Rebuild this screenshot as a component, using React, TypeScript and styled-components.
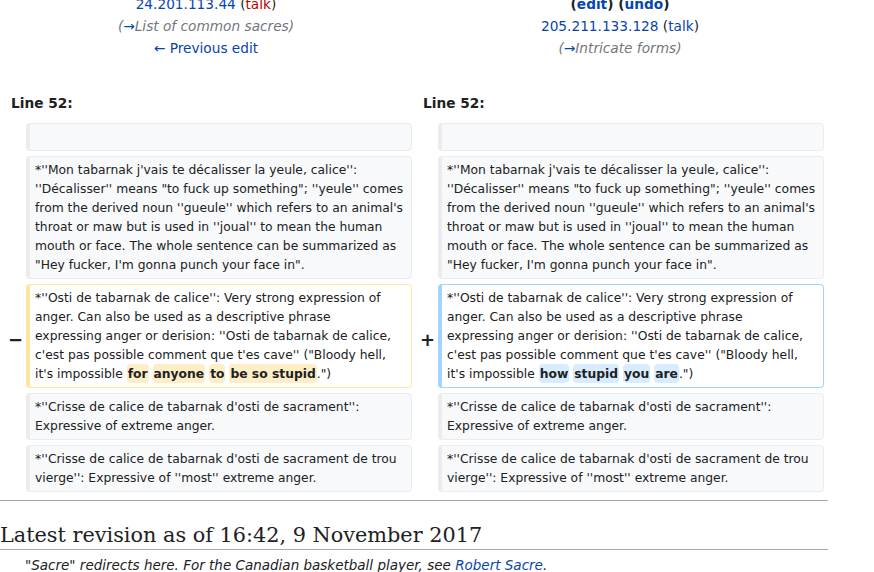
import React from "react";
import styled, { createGlobalStyle } from "styled-components";

const GlobalStyle = createGlobalStyle`
  body {
    margin: 0;
    background: #ffffff;
    color: #202122;
    font-family: "DejaVu Sans", sans-serif;
    overflow: hidden;
  }
`;

const Page = styled.div`
  width: 828px;
  margin-top: -7px;
`;

const DiffHeader = styled.div`
  display: grid;
  grid-template-columns: 412px 416px;
  font-size: 13.7px;
  line-height: 22px;
  text-align: center;
`;

const HeaderCell = styled.div`
  display: flex;
  flex-direction: column;
`;

const Link = styled.a<{ red?: boolean; bold?: boolean }>`
  color: ${({ red }) => (red ? "#ba0000" : "#0645ad")};
  font-weight: ${({ bold }) => (bold ? 700 : 400)};
  text-decoration: none;
`;

const Strong = styled.span`
  font-weight: 700;
`;

const Comment = styled.span`
  color: #72777d;
  font-style: italic;
`;

const DiffTable = styled.div`
  display: grid;
  grid-template-columns: 26px 386px 26px 386px;
  row-gap: 5px;
  margin-top: 34px;
`;

const LineNo = styled.div`
  grid-column: span 2;
  padding-left: 11px;
  font-size: 13.7px;
  font-weight: 700;
  line-height: 20px;
  margin-bottom: 5px;
`;

const Marker = styled.div`
  display: flex;
  align-items: center;
  justify-content: flex-end;
  padding: 8px 3px 0 0;
  font-size: 18px;
  font-weight: 700;
  line-height: 1;
`;

type Kind = "context" | "deleted" | "added" | "empty";

const borderFor = (kind: Kind) =>
  kind === "deleted" ? "#ffe49c" : kind === "added" ? "#a3d3ff" : "#eaecf0";

const Line = styled.div<{ kind: Kind }>`
  background: ${({ kind }) =>
    kind === "context" || kind === "empty" ? "#f8f9fa" : "#ffffff"};
  border: 1px solid ${({ kind }) => borderFor(kind)};
  border-left-width: 4px;
  border-radius: 4px;
  padding: 4px 5px 3px;
  min-height: 19px;
  font-size: 12.32px;
  line-height: 19px;
  color: #202122;
  white-space: pre;
  overflow: hidden;
`;

const Change = styled.span<{ kind: "deleted" | "added" }>`
  background: ${({ kind }) => (kind === "deleted" ? "#feeec8" : "#d8ecff")};
  font-weight: 700;
  border-radius: 4px;
  padding: 3px 1px 2px;
`;

const Rule = styled.div`
  height: 1px;
  background: #a2a9b1;
  margin-top: 8px;
`;

const Heading = styled.h2`
  margin: 21px 0 0;
  padding: 0;
  border-bottom: 1px solid #a2a9b1;
  font-family: "DejaVu Serif", serif;
  font-weight: 400;
  font-size: 20.8px;
  line-height: 27px;
`;

const Hatnote = styled.div`
  padding-left: 25px;
  margin-top: 5px;
  font-size: 13.5px;
  font-style: italic;
  line-height: 20px;
`;

const mouthLines = [
  `*''Mon tabarnak j'vais te décalisser la yeule, calice'':`,
  `''Décalisser'' means "to fuck up something"; ''yeule'' comes`,
  `from the derived noun ''gueule'' which refers to an animal's`,
  `throat or maw but is used in ''joual'' to mean the human`,
  `mouth or face. The whole sentence can be summarized as`,
  `"Hey fucker, I'm gonna punch your face in".`,
];

const tailRows = [
  [
    `*''Crisse de calice de tabarnak d'osti de sacrament'':`,
    `Expressive of extreme anger.`,
  ],
  [
    `*''Crisse de calice de tabarnak d'osti de sacrament de trou`,
    `vierge'': Expressive of ''most'' extreme anger.`,
  ],
];

const changedLines = [
  `*''Osti de tabarnak de calice'': Very strong expression of`,
  `anger. Can also be used as a descriptive phrase`,
  `expressing anger or derision: ''Osti de tabarnak de calice,`,
  `c'est pas possible comment que t'es cave'' ("Bloody hell,`,
  `it's impossible `,
];

const removedWords = ["for", "anyone", "to", "be so stupid"];
const addedWords = ["how", "stupid", "you", "are"];

function ContextRow({ lines }: { lines: string[] }) {
  const text = lines.join("\n");
  return (
    <>
      <Marker />
      <Line kind="context">{text}</Line>
      <Marker />
      <Line kind="context">{text}</Line>
    </>
  );
}

function ChangedText({
  kind,
  words,
}: {
  kind: "deleted" | "added";
  words: string[];
}) {
  return (
    <>
      {changedLines.join("\n")}
      {words.map((w, i) => (
        <React.Fragment key={w}>
          {i > 0 && " "}
          <Change kind={kind}>{w}</Change>
        </React.Fragment>
      ))}
      .")
    </>
  );
}

export default function App() {
  return (
    <>
      <GlobalStyle />
      <Page>
        <DiffHeader>
          <HeaderCell>
            <div>
              <Link>24.201.113.44</Link> (<Link red>talk</Link>)
            </div>
            <div>
              <Comment>
                (<Link>→</Link>List of common sacres)
              </Comment>
            </div>
            <div>
              <Link>← Previous edit</Link>
            </div>
          </HeaderCell>
          <HeaderCell>
            <div>
              <Strong>
                (<Link bold>edit</Link>) (<Link bold>undo</Link>)
              </Strong>
            </div>
            <div>
              <Link>205.211.133.128</Link> (<Link>talk</Link>)
            </div>
            <div>
              <Comment>
                (<Link>→</Link>Intricate forms)
              </Comment>
            </div>
          </HeaderCell>
        </DiffHeader>

        <DiffTable>
          <LineNo>Line 52:</LineNo>
          <LineNo>Line 52:</LineNo>

          <Marker />
          <Line kind="empty" />
          <Marker />
          <Line kind="empty" />

          <ContextRow lines={mouthLines} />

          <Marker>−</Marker>
          <Line kind="deleted">
            <ChangedText kind="deleted" words={removedWords} />
          </Line>
          <Marker>+</Marker>
          <Line kind="added">
            <ChangedText kind="added" words={addedWords} />
          </Line>

          {tailRows.map((lines, i) => (
            <ContextRow key={i} lines={lines} />
          ))}
        </DiffTable>

        <Rule />
        <Heading>Latest revision as of 16:42, 9 November 2017</Heading>
        <Hatnote>
          "Sacre" redirects here. For the Canadian basketball player, see{" "}
          <Link>Robert Sacre</Link>.
        </Hatnote>
      </Page>
    </>
  );
}
